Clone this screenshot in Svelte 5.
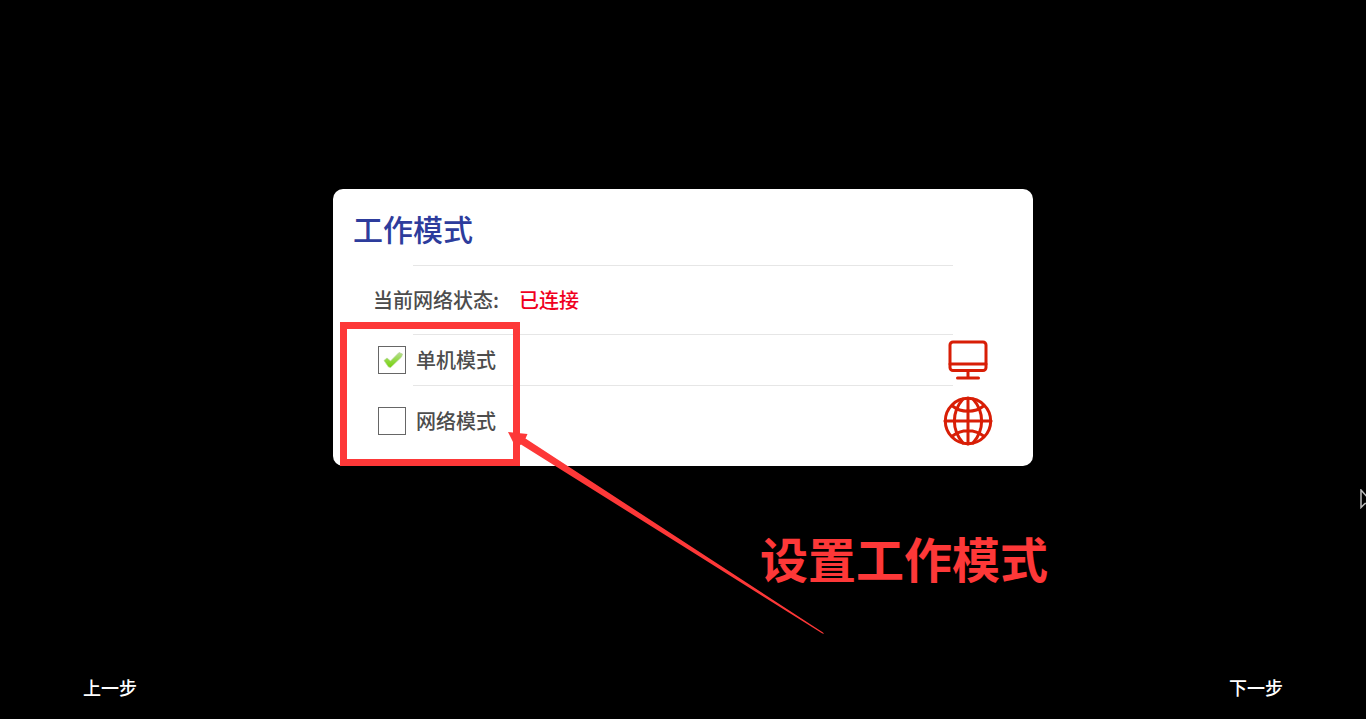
<script>
  let mode = $state('single');
  const modes = [
    { id: 'single', label: '单机模式' },
    { id: 'network', label: '网络模式' }
  ];
</script>

<div class="page">
  <main>
    <section class="card" aria-labelledby="title">
      <h1 id="title">工作模式</h1>
      <hr />
      <p class="status">当前网络状态:<strong>已连接</strong></p>
      {#each modes as item (item.id)}
        <hr />
        <div class="row {item.id}">
          <span class="box">
            <input
              id={item.id}
              type="checkbox"
              checked={mode === item.id}
              onchange={() => (mode = item.id)}
            />
            {#if mode === item.id}
              <svg class="tick" viewBox="0 0 20 18" aria-hidden="true">
                <defs>
                  <linearGradient id="green" x1="0" y1="0" x2="0" y2="1">
                    <stop offset="0" stop-color="#b8dc92" />
                    <stop offset="0.5" stop-color="#93da46" />
                    <stop offset="1" stop-color="#76d00c" />
                  </linearGradient>
                </defs>
                <path d="M1 9.500 4 7 7.500 10 16 1.500 19.500 3 18.500 6 7.600 16.500 5.500 16Z" fill="url(#green)" stroke="#b4d692" stroke-width="0.7" stroke-linejoin="round" />
              </svg>
            {/if}
          </span>
          <label for={item.id}>{item.label}</label>
          {#if item.id === 'single'}
            <svg class="icon monitor" viewBox="0 0 40 40" aria-hidden="true">
              <rect x="2" y="2" width="36" height="28.5" rx="3" />
              <path d="M2 24H38M20 31V37M9.5 38H30.5" />
            </svg>
          {:else}
            <svg class="icon globe" viewBox="0 0 50 50" aria-hidden="true">
              <circle cx="25" cy="25" r="22.7" />
              <path d="M2 25H48M25 2V48M20 3C8.500 16 8.500 34 20 47M30 3C41.500 16 41.500 34 30 47M9.500 10C18 17 32 17 40.500 10M9.500 40C18 33 32 33 40.500 40" />
            </svg>
          {/if}
        </div>
      {/each}

      <div class="highlight"></div>
      <svg class="arrow" viewBox="0 0 316 202" aria-hidden="true">
        <path d="M0 0 19.500 2 17.500 6.500 315 200.500 316 202 314 201.300 13 12.500 8 16Z" />
      </svg>
      <p class="note">设置工作模式</p>
    </section>
  </main>

  <footer>
    <button type="button">上一步</button>
    <button type="button">下一步</button>
  </footer>

  <svg class="pointer" viewBox="0 0 14 20" aria-hidden="true">
    <path d="M1 1V18.500L5 14.500H13Z" />
  </svg>
</div>

<style>
  :global(body) {
    background: #000;
  }

  .page {
    position: relative;
    display: flex;
    flex-direction: column;
    min-height: 100vh;
    overflow: hidden;
    background: #000;
    font-family: 'Noto Sans CJK SC', sans-serif;
    font-weight: 500;
  }

  main {
    flex: 1;
    display: flex;
    align-items: center;
    justify-content: center;
  }

  .card {
    position: relative;
    box-sizing: border-box;
    width: 100%;
    max-width: 700px;
    border-radius: 10px;
    background: #fff;
    color: #4d4d4d;
    font-size: 20px;
    line-height: 28px;
  }

  h1 {
    margin: 0;
    padding: 17px 20px 15px;
    color: #2d3c9c;
    font-size: 30px;
    font-weight: 500;
    line-height: 44px;
  }

  hr {
    height: 1px;
    margin: 0 80px;
    border: 0;
    background: #e6e6e6;
  }

  .status {
    margin: 0;
    padding: 20px 40px;
  }

  .status strong {
    margin-left: 20px;
    color: #f0001e;
    font-weight: 500;
  }

  .row {
    display: flex;
    align-items: center;
    gap: 10px;
    height: 50px;
    padding: 0 40px 0 45px;
  }

  .network {
    height: 70px;
    padding-bottom: 10px;
  }

  .box {
    position: relative;
    display: flex;
  }

  input {
    appearance: none;
    box-sizing: border-box;
    width: 28px;
    height: 28px;
    margin: 0;
    border: 1px solid #666;
    background: #fff;
  }

  .tick {
    position: absolute;
    top: 5px;
    left: 5px;
    width: 20px;
    height: 18px;
    pointer-events: none;
  }

  .icon {
    margin-left: auto;
    fill: none;
    stroke: #d81e06;
    stroke-width: 3;
    stroke-linecap: round;
  }

  .monitor {
    width: 40px;
    margin-right: 5px;
  }

  .globe {
    width: 50px;
    stroke-width: 3;
  }

  .highlight {
    position: absolute;
    top: 133px;
    left: 7px;
    box-sizing: border-box;
    width: 180px;
    height: 144px;
    border: 7px solid #fd3838;
    pointer-events: none;
  }

  .arrow {
    position: absolute;
    top: 243px;
    left: 175px;
    width: 316px;
    fill: #fd3838;
    pointer-events: none;
  }

  .note {
    position: absolute;
    top: 340px;
    left: 427px;
    margin: 0;
    color: #fd3838;
    font-size: 48px;
    font-weight: 700;
    line-height: 56px;
    white-space: nowrap;
  }

  footer {
    display: flex;
    justify-content: space-between;
    padding: 8px 83px;
  }

  button {
    padding: 10px 0;
    border: 0;
    background: none;
    color: #fff;
    font: inherit;
    font-size: 18px;
    line-height: 28px;
  }

  .pointer {
    position: absolute;
    top: 68%;
    right: -8px;
    width: 14px;
    height: 20px;
    fill: #000;
    stroke: #bbb;
    stroke-width: 1.500;
  }
</style>
